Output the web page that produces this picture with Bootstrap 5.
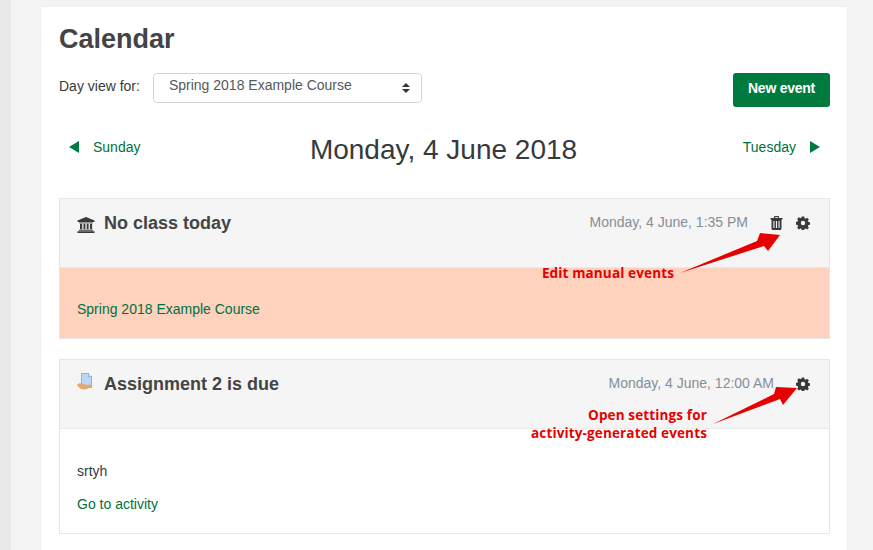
<!DOCTYPE html>
<html lang="en">

<head>
  <meta charset="UTF-8">
  <title>Calendar</title>
  <link href="https://cdn.jsdelivr.net/npm/bootstrap@5.3.3/dist/css/bootstrap.min.css" rel="stylesheet">
  <style>
    html, body { height: 100%; }
    body { background: #f3f3f3; font-family: "Liberation Sans", Arial, sans-serif; font-size: 14px; color: #373a3c; overflow: hidden; }
    a { color: #00703c; text-decoration: none; }
    .side-strip { width: 11px; background: #e8e8e8; flex: none; }
    .page-wrap { padding: 6px 25px 0 29px; height: 100%; }
    .main-panel { background: #fff; border: 1px solid #efefef; border-bottom: 0; padding: 14px 17px 0 18px; height: 100%; overflow: hidden; }
    .page-title { font-size: 27px; font-weight: 700; color: #444; line-height: 36px; margin: 0 0 16px; }
    .view-label { margin-right: 13px; line-height: 26px; }
    .course-select { width: 269px; height: 30px; font-size: 14px; color: #55595c; padding: 0 16px 5px 15px; border-color: #d3d6d9; border-radius: 4px; line-height: 23px; background-image: url("data:image/svg+xml,%3Csvg xmlns='http://www.w3.org/2000/svg' viewBox='0 0 8 10'%3E%3Cpath fill='%23333' d='M4 0 8 4H0zM4 10 0 6h8z'/%3E%3C/svg%3E"); background-size: 8px 10px; background-position: right 11px center; }
    .new-btn { background: #007a3e; color: #fff; font-size: 14px; font-weight: 700; letter-spacing: -.25px; width: 97px; height: 34px; padding: 0 0 3px; border: 0; border-radius: 3px; }
    .day-nav { margin-top: 22px; height: 41px; padding: 0 10px; }
    .day-link { width: 129px; line-height: 20px; padding-bottom: 6px; }
    .day-next { width: 131px; }
    .day-title { font-size: 28px; line-height: 41px; color: #373a3c; font-weight: 400; margin: 0; }
    .tri-left { width: 0; height: 0; border: 6.5px solid transparent; border-right: 10px solid #007a3e; border-left: 0; margin-right: 14px; }
    .tri-right { width: 0; height: 0; border: 6.5px solid transparent; border-left: 10px solid #007a3e; border-right: 0; margin-left: 14px; }
    .event-box { border: 1px solid #e6e6e6; margin-bottom: 20px; }
    .event-box:last-child { margin-bottom: 0; }
    .event-first { margin-top: 28px; }
    .event-head { background: #f5f5f5; height: 69px; padding: 12px 19px 0 17px; border-bottom: 1px solid #e9e9e9; }
    .bank-icon { width: 18px; height: 16px; margin: 6px 9px 0 0; flex: none; fill: #373a3c; }
    .doc-icon { width: 18px; height: 18px; margin: 1px 9px 0 0; flex: none; }
    .event-name { font-size: 18px; font-weight: 700; color: #444; line-height: 24px; margin: 0; }
    .event-date { color: #868e96; line-height: 22px; }
    .trash-icon { width: 13px; height: 14px; flex: none; fill: #373a3c; margin: 5px 13px 0 22px; }
    .gear-icon { width: 14px; height: 14px; flex: none; fill: #373a3c; margin-top: 5px; }
    .gear-only { margin-left: 22px; }
    .event-body-tint { background: #ffd2bd; height: 70px; padding: 31px 17px 0; }
    .event-body-plain { background: #fff; height: 104px; padding: 34px 17px 0; }
    .event-body-plain p { margin: 0 0 14px; line-height: 17px; }
    .note-text { position: absolute; color: #e60000; font-family: "Open Sans", sans-serif; font-weight: 700; font-size: 13.5px; line-height: 18px; text-align: right; white-space: nowrap; letter-spacing: .14px; }
    .note-one { right: 199px; top: 264px; }
    .note-two { right: 166px; top: 406px; }
    .arrows { position: absolute; left: 0; top: 0; pointer-events: none; }
  </style>
</head>

<body class="d-flex">

  <div class="side-strip"></div>

  <div class="page-wrap flex-grow-1">
    <div class="main-panel">
      <h1 class="page-title">Calendar</h1>

      <div class="d-flex justify-content-between align-items-start">
        <div class="d-flex align-items-start">
          <span class="view-label">Day view for:</span>
          <select class="form-select course-select">
            <option>Spring 2018 Example Course</option>
          </select>
        </div>
        <button class="btn new-btn">New event</button>
      </div>

      <div class="day-nav d-flex justify-content-between align-items-center">
        <a class="day-link d-flex align-items-center" href="#"><span class="tri-left"></span>Sunday</a>
        <h2 class="day-title">Monday, 4 June 2018</h2>
        <a class="day-link day-next d-flex align-items-center justify-content-end" href="#">Tuesday<span class="tri-right"></span></a>
      </div>

      <!-- Manual event -->
      <div class="event-box event-first">
        <div class="event-head d-flex align-items-start">
          <svg class="bank-icon" viewBox="0 0 18 16">
            <path d="M9 0 17.500 3.500V5H.5V3.500z"/>
            <path d="M2 5.500h14v.8H2zM3 6.800h2.200v5.400H3zM6.500 6.800h1.900v5.400H6.500zM9.700 6.800h1.900v5.400H9.700zM12.900 6.800h2.200v5.400h-2.200zM2 12.700h14v1H2zM.5 14.300h17V16H.5z"/>
          </svg>
          <h3 class="event-name flex-grow-1">No class today</h3>
          <span class="event-date">Monday, 4 June, 1:35 PM</span>
          <svg class="trash-icon" viewBox="0 0 13 14">
            <path fill-rule="evenodd" d="M4 1c0-.6.4-1 1-1h3c.6 0 1 .4 1 1v1h3.500v1.500H11.500V12.500c0 .9-.6 1.500-1.400 1.500H2.900c-.8 0-1.400-.6-1.400-1.500V3.500H.5V2H4zM5.200 1v1h2.600V1zM3.400 5v7h1.100V5zM5.950 5v7h1.100V5zM8.500 5v7h1.100V5z"/>
          </svg>
          <svg class="gear-icon" viewBox="0 0 16 16">
            <path fill-rule="evenodd" d="M6.600.5h2.800l.4 2 1.200.5 1.700-1.100 2 2-1.100 1.700.5 1.200 2 .4v2.800l-2 .4-.5 1.200 1.100 1.700-2 2-1.700-1.100-1.200.5-.4 2H6.600l-.4-2-1.200-.5-1.700 1.100-2-2 1.100-1.700-.5-1.200-2-.4V6.600l2-.4.500-1.200-1.100-1.700 2-2L5 2.400l1.200-.5zM8 5.500a2.500 2.500 0 1 0 0 5 2.500 2.500 0 0 0 0-5z"/>
          </svg>
        </div>
        <div class="event-body-tint">
          <a href="#">Spring 2018 Example Course</a>
        </div>
      </div>

      <!-- Activity event -->
      <div class="event-box">
        <div class="event-head d-flex align-items-start">
          <svg class="doc-icon" viewBox="0 0 18 18">
            <path d="M4.500.5h7l3 3v11h-10z" fill="#bcd6f5" stroke="#7ea6d8" stroke-width=".8"/>
            <path d="M11.500.5v3h3" fill="#eaf2fc" stroke="#7ea6d8" stroke-width=".8"/>
            <path d="M0 12c1-1.500 3-2 5-1.500l3 1c2 .3 4 .2 6 .2 2 0 2 1 .7 1.500-2 1-4 3.300-7.700 3.300-2.500 0-5-1.500-7-4.500z" fill="#e2a970"/>
          </svg>
          <h3 class="event-name flex-grow-1">Assignment 2 is due</h3>
          <span class="event-date">Monday, 4 June, 12:00 AM</span>
          <svg class="gear-icon gear-only" viewBox="0 0 16 16">
            <path fill-rule="evenodd" d="M6.600.5h2.800l.4 2 1.200.5 1.700-1.100 2 2-1.100 1.700.5 1.200 2 .4v2.800l-2 .4-.5 1.200 1.100 1.700-2 2-1.700-1.100-1.200.5-.4 2H6.600l-.4-2-1.200-.5-1.700 1.100-2-2 1.100-1.700-.5-1.200-2-.4V6.600l2-.4.500-1.200-1.100-1.700 2-2L5 2.400l1.200-.5zM8 5.500a2.500 2.500 0 1 0 0 5 2.500 2.500 0 0 0 0-5z"/>
          </svg>
        </div>
        <div class="event-body-plain">
          <p>srtyh</p>
          <a href="#">Go to activity</a>
        </div>
      </div>
    </div>
  </div>

  <!-- Screenshot annotations -->
  <div class="note-text note-one">Edit manual events</div>
  <div class="note-text note-two">Open settings for<br>activity-generated events</div>
  <svg class="arrows" width="873" height="550" fill="#e60000">
    <path d="M680 273 757 241 760 233 780 235 768 251 764 246z"/>
    <path d="M713 424 774 394 776 387 797 388 783 405 780 399z"/>
  </svg>

</body>

</html>
